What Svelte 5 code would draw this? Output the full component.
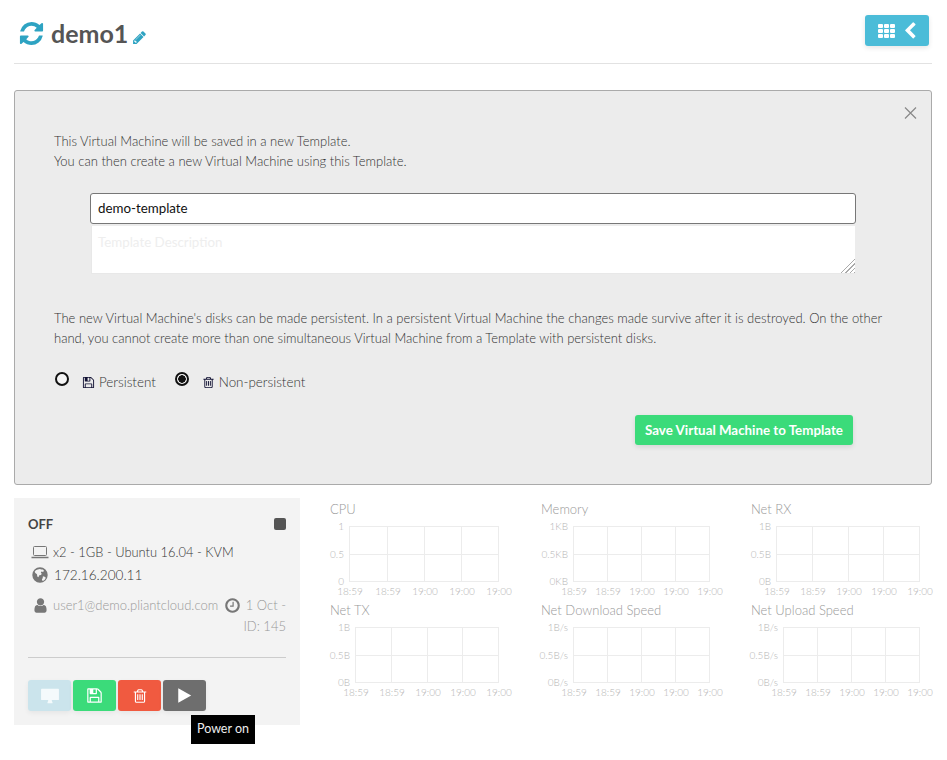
<script>
  const paths = {
    refresh: 'M1639 1056q0 5-1 7-64 268-268 434.5t-478 166.5q-146 0-282.5-55t-243.5-157l-129 129q-19 19-45 19t-45-19-19-45v-448q0-26 19-45t45-19h448q26 0 45 19t19 45-19 45l-137 137q71 66 161 102t187 36q134 0 250-65t186-179q11-17 53-117 8-23 30-23h192q13 0 22.500 9.500t9.500 22.500zm25-800v448q0 26-19 45t-45 19h-448q-26 0-45-19t-19-45 19-45l138-138q-148-137-349-137-134 0-250 65t-186 179q-11 17-53 117-8 23-30 23h-199q-13 0-22.500-9.500t-9.500-22.500v-7q65-268 270-434.500t480-166.500q146 0 284 55.500t245 156.500l130-129q19-19 45-19t45 19 19 45z',
    pencil: 'M491 1536l91-91-235-235-91 91v107h128v128h107zm523-928q0-22-22-22-10 0-17 7l-542 542q-7 7-7 17 0 22 22 22 10 0 17-7l542-542q7-7 7-17zm-54-192l416 416-832 832h-416v-416zm683 96q0 53-37 90l-166 166-416-416 166-165q36-38 90-38 53 0 91 38l235 234q37 39 37 91z',
    chevron: 'M1427 301l-531 531 531 531q19 19 19 45t-19 45l-166 166q-19 19-45 19t-45-19l-742-742q-19-19-19-45t19-45l742-742q19-19 45-19t45 19l166 166q19 19 19 45t-19 45z',
    save: 'M512 1536h768v-384h-768v384zm896 0h128v-896q0-14-10-38.500t-20-34.500l-281-281q-10-10-34-20t-39-10v416q0 40-28 68t-68 28h-576q-40 0-68-28t-28-68v-416h-128v1280h128v-416q0-40 28-68t68-28h832q40 0 68 28t28 68v416zm-384-928v-320q0-13-9.500-22.500t-22.500-9.500h-192q-13 0-22.500 9.500t-9.500 22.500v320q0 13 9.500 22.500t22.500 9.500h192q13 0 22.500-9.500t9.500-22.500zm640 32v928q0 40-28 68t-68 28h-1344q-40 0-68-28t-28-68v-1344q0-40 28-68t68-28h928q40 0 88 20t76 48l280 280q28 28 48 76t20 88z',
    trash: 'M704 736v576q0 14-9 23t-23 9h-64q-14 0-23-9t-9-23v-576q0-14 9-23t23-9h64q14 0 23 9t9 23zm256 0v576q0 14-9 23t-23 9h-64q-14 0-23-9t-9-23v-576q0-14 9-23t23-9h64q14 0 23 9t9 23zm256 0v576q0 14-9 23t-23 9h-64q-14 0-23-9t-9-23v-576q0-14 9-23t23-9h64q14 0 23 9t9 23zm128 724v-948h-896v948q0 22 7 40.500t14.500 27 10.500 8.500h832q3 0 10.500-8.500t14.500-27 7-40.500zm-672-1076h448l-48-117q-7-9-17-11h-317q-10 2-17 11zm928 32v64q0 14-9 23t-23 9h-96v948q0 83-47 143.500t-113 60.500h-832q-66 0-113-58.500t-47-141.500v-952h-96q-14 0-23-9t-9-23v-64q0-14 9-23t23-9h309l70-167q15-37 54-63t79-26h320q40 0 79 26t54 63l70 167h309q14 0 23 9t9 23z',
    user: 'M1536 1399q0 109-62.500 187t-150.500 78h-854q-88 0-150.500-78t-62.500-187q0-85 8.500-160.500t31.500-152 58.500-131 94-89 134.500-34.500q131 128 313 128t313-128q76 0 134.500 34.500t94 89 58.500 131 31.500 152 8.500 160.500zm-256-887q0 159-112.500 271.500t-271.500 112.500-271.500-112.500-112.500-271.500 112.500-271.500 271.500-112.500 271.500 112.500 112.500 271.500z',
    clock: 'M1024 544v448q0 14-9 23t-23 9h-320q-14 0-23-9t-9-23v-64q0-14 9-23t23-9h224v-352q0-14 9-23t23-9h64q14 0 23 9t9 23zm416 352q0-148-73-273t-198-198-273-73-273 73-198 198-73 273 73 273 198 198 273 73 273-73 198-198 73-273zm224 0q0 209-103 385.500t-279.500 279.500-385.500 103-385.500-103-279.500-279.500-103-385.500 103-385.500 279.500-279.500 385.500-103 385.500 103 279.500 279.500 103 385.500z',
    globe: 'M896 128a768 768 0 1 0 0 1536a768 768 0 1 0 0-1536zm-10 170l140 60 150-10 110 110-70 130-170-30-70 90 90 130-70 110-170 30-90 190-110-70-30-210-170-130-60-130 110-150 190-60zm300 730l180 30 110 110-90 170-150 120-110 20-40-130 80-150z',
    play: 'M240 140L1600 896L240 1652z',
    desktop: 'M160 256H1632a64 64 0 0 1 64 64V1200a64 64 0 0 1-64 64H1056q0 120 64 200v72H672v-72q64-80 64-200H160a64 64 0 0 1-64-64V320a64 64 0 0 1 64-64z'
  };

  const charts = [
    { title: 'CPU', x: [19, 57, 94, 131, 168], y: ['1', '0.5', '0'] },
    { title: 'Memory', x: [32, 66, 100, 134, 168], y: ['1KB', '0.5KB', '0KB'] },
    { title: 'Net RX', x: [25, 61, 97, 132, 168], y: ['1B', '0.5B', '0B'] },
    { title: 'Net TX', x: [25, 61, 97, 132, 168], y: ['1B', '0.5B', '0B'] },
    { title: 'Net Download Speed', x: [32, 66, 100, 134, 168], y: ['1B/s', '0.5B/s', '0B/s'] },
    { title: 'Net Upload Speed', x: [32, 66, 100, 134, 168], y: ['1B/s', '0.5B/s', '0B/s'] }
  ];
  const times = ['18:59', '18:59', '19:00', '19:00', '19:00'];
  const rows = [6, 34, 61];

  let persistent = $state(false);
  let name = $state('demo-template');
  let description = $state('');
</script>

{#snippet icon(d, size, cls = '')}
  <svg class={cls} width={size} height={size} viewBox="0 0 1792 1792" fill="currentColor" aria-hidden="true"><path {d} /></svg>
{/snippet}

<div class="page">
  <header class="top">
    <h1>
      {@render icon(paths.refresh, 27, 'spin')}
      <span>demo1</span>
      {@render icon(paths.pencil, 15, 'pencil')}
    </h1>
    <button class="back" type="button" aria-label="Back to list">
      <span class="grid-icon"><i></i><i></i><i></i><i></i><i></i><i></i><i></i><i></i><i></i></span>
      {@render icon(paths.chevron, 18)}
    </button>
  </header>

  <section class="dialog">
    <button class="close" type="button" aria-label="Close">
      <svg width="14" height="14" viewBox="0 0 14 14"><path d="M2 1.500l11 11M13 1.500l-11 11" stroke="#888" stroke-width="1.200" fill="none" /></svg>
    </button>
    <p class="intro">
      This Virtual Machine will be saved in a new Template.<br />
      You can then create a new Virtual Machine using this Template.
    </p>
    <div class="fields">
      <input type="text" bind:value={name} />
      <textarea placeholder="Template Description" bind:value={description}></textarea>
    </div>
    <p class="note">
      The new Virtual Machine's disks can be made persistent. In a persistent Virtual Machine the changes made survive after it is destroyed. On the other hand, you cannot create more than one simultaneous Virtual Machine from a Template with persistent disks.
    </p>
    <div class="radios">
      <label>
        <input type="radio" name="disks" checked={persistent} onchange={() => (persistent = true)} />
        {@render icon(paths.save, 13, 'ink')}
        Persistent
      </label>
      <label>
        <input type="radio" name="disks" checked={!persistent} onchange={() => (persistent = false)} />
        {@render icon(paths.trash, 13, 'ink')}
        Non-persistent
      </label>
    </div>
    <div class="actions">
      <button class="save" type="button">Save Virtual Machine to Template</button>
    </div>
  </section>

  <div class="bottom">
    <aside class="vm">
      <div class="state"><strong>OFF</strong><span class="stop"></span></div>
      <div class="line spec">
        <svg width="18" height="14" viewBox="0 0 18 14" fill="none" stroke="#777"><rect x="2.500" y="1.500" width="13" height="9" rx="1" /><path d="M0.500 12.500h17" stroke-width="1.500" /></svg>
        x2 - 1GB - Ubuntu 16.04 - KVM
      </div>
      <div class="line ip">
        <span class="globe">{@render icon(paths.globe, 18)}</span>
        172.16.200.11
      </div>
      <div class="meta">
        <div class="meta-row">
          <span class="owner">{@render icon(paths.user, 17)} user1@demo.pliantcloud.com</span>
          <span class="date">{@render icon(paths.clock, 17)} 1 Oct -</span>
        </div>
        <div class="vm-id">ID: 145</div>
      </div>
      <hr />
      <div class="btns">
        <button class="b vnc" type="button" aria-label="Console">{@render icon(paths.desktop, 20)}</button>
        <button class="b keep" type="button" aria-label="Save">{@render icon(paths.save, 17)}</button>
        <button class="b del" type="button" aria-label="Delete">{@render icon(paths.trash, 16)}</button>
        <button class="b power" type="button" aria-label="Power on">{@render icon(paths.play, 17)}</button>
        <span class="tip">Power on</span>
      </div>
    </aside>

    <div class="charts">
      {#each charts as c}
        <figure>
          <figcaption>{c.title}</figcaption>
          <svg width="200" height="79" viewBox="0 0 200 79">
            {#each rows as r, i}
              <line x1={c.x[0]} x2={c.x[4] + 1} y1={r + 0.5} y2={r + 0.5} />
              <text class="ytick" x={c.x[0] - 5} y={r + 3.5}>{c.y[i]}</text>
            {/each}
            {#each c.x as x, i}
              <line x1={x + 0.5} x2={x + 0.5} y1={rows[0]} y2={rows[2] + 1} />
              <text class="xtick" x={x + 1} y="75">{times[i]}</text>
            {/each}
          </svg>
        </figure>
      {/each}
    </div>
  </div>
</div>

<style>
  :global(body) {
    background: #fff;
    font-family: Lato, sans-serif;
    font-size: 13px;
    font-weight: 300;
    color: #333;
  }

  .page {
    width: 918px;
    margin-left: 14px;
    padding-bottom: 35px;
  }

  .top {
    display: flex;
    justify-content: space-between;
    height: 63px;
    border-bottom: 1px solid #e2e2e2;
    margin-bottom: 26px;
  }

  h1 {
    display: flex;
    align-items: center;
    margin: 0;
    padding: 8px 0 4px 4px;
    height: 63px;
    color: #555;
    font-size: 25px;
    font-weight: 700;
    line-height: 1;
    box-sizing: border-box;
  }

  h1 :global(.spin) {
    color: #2ea3c2;
    margin-right: 6px;
  }

  h1 :global(.pencil) {
    color: #2ea3c2;
    margin: 7px 0 0 4px;
  }

  .back {
    display: flex;
    align-items: center;
    justify-content: center;
    gap: 6px;
    width: 64px;
    height: 31px;
    margin: 15px 3px 0 0;
    padding: 0 0 0 3px;
    border: 0;
    border-radius: 3px;
    background: #4bbcd8;
    color: #fff;
    box-shadow: 0 2px 5px rgba(0, 0, 0, 0.1);
  }

  .grid-icon {
    display: grid;
    grid-template-columns: repeat(3, 5px);
    grid-auto-rows: 4px;
    gap: 1px;
  }

  .grid-icon i {
    background: #fff;
    border-radius: 1px;
  }

  .dialog {
    position: relative;
    box-sizing: border-box;
    height: 395px;
    padding: 40px 39px 0;
    border: 1px solid #aaa;
    border-radius: 3px;
    background: #ececec;
  }

  .close {
    position: absolute;
    top: 15px;
    right: 14px;
    padding: 0;
    border: 0;
    background: none;
    line-height: 0;
  }

  p {
    margin: 0;
    line-height: 20px;
  }

  .fields {
    display: flex;
    flex-direction: column;
    gap: 2px;
    margin: 22px 36px 0;
  }

  .fields input,
  .fields textarea {
    display: block;
    box-sizing: border-box;
    font-family: inherit;
    font-size: 13.333px;
    font-weight: 400;
    background: #fff;
    outline: none;
  }

  .fields input {
    width: 766px;
    height: 31px;
    padding: 0 7px 2px;
    border: 1px solid #777;
    border-radius: 3px;
    color: #111;
  }

  .fields textarea {
    width: 764px;
    height: 48px;
    margin-left: 1px;
    padding: 8px 6px;
    border: 1px solid #e8e8e8;
    border-top: 0;
    border-right: 0;
  }

  .fields textarea::placeholder {
    color: #eee;
  }

  .fields textarea::-webkit-resizer {
    background:
      linear-gradient(135deg, #fff 50%, transparent 50%),
      repeating-linear-gradient(135deg, #fff 0 2px, #aaa 2px 3px);
  }

  .note {
    margin-top: 34px;
  }

  .radios {
    display: flex;
    gap: 18px;
    margin-top: 23px;
    height: 22px;
    font-size: 13.4px;
  }

  .radios label {
    display: flex;
    align-items: center;
  }

  .radios input {
    appearance: none;
    box-sizing: border-box;
    width: 14px;
    height: 14px;
    margin: -6px 13px 0 1px;
    border: 2px solid #111;
    border-radius: 50%;
    background: #f4f4f4;
  }

  .radios input:checked {
    background: radial-gradient(circle, #111 0 3.500px, #f4f4f4 4px);
  }

  .radios :global(.ink) {
    color: #113;
    margin-right: 4px;
  }

  .actions {
    display: flex;
    justify-content: flex-end;
    margin: 22px 39px 0 0;
  }

  .save {
    width: 218px;
    height: 30px;
    padding: 0;
    border: 0;
    border-radius: 3px;
    background: #3bdb7a;
    color: #fff;
    font-family: inherit;
    font-size: 13.333px;
    font-weight: 700;
    box-shadow: 0 2px 5px rgba(0, 0, 0, 0.1);
  }

  .bottom {
    display: flex;
    gap: 30px;
    margin-top: 13px;
  }

  .vm {
    box-sizing: border-box;
    flex: none;
    width: 286px;
    height: 227px;
    padding: 15px 14px 0;
    background: #f3f3f3;
  }

  .state {
    display: flex;
    justify-content: space-between;
    align-items: center;
    height: 22px;
    color: #444;
  }

  .state strong {
    font-weight: 700;
  }

  .stop {
    width: 12px;
    height: 12px;
    border-radius: 2px;
    background: #555;
  }

  .line {
    display: flex;
    align-items: center;
    gap: 4px;
    color: #333;
    height: 23px;
  }

  .spec {
    margin: 5px 0 0 3px;
    font-size: 12.9px;
  }

  .ip {
    font-size: 13.6px;
  }

  .globe {
    display: flex;
    color: #777;
    margin-left: 3px;
    margin-right: 1px;
  }

  .meta {
    margin-top: 9px;
    color: #999;
    line-height: 21px;
  }

  .meta-row {
    display: flex;
    justify-content: space-between;
  }

  .owner,
  .date {
    display: flex;
    align-items: center;
    gap: 4px;
    height: 21px;
  }

  .owner :global(svg),
  .date :global(svg) {
    color: #777;
  }

  .owner {
    margin-left: 4px;
  }

  .date {
    gap: 5px;
  }

  .vm-id {
    text-align: right;
  }

  hr {
    margin: 20px 0 0;
    border: 0;
    border-top: 1px solid #ccc;
  }

  .btns {
    position: relative;
    display: flex;
    gap: 2px;
    margin-top: 22px;
  }

  .b {
    display: flex;
    align-items: center;
    justify-content: center;
    width: 43px;
    height: 31px;
    padding: 0;
    border: 0;
    border-radius: 3px;
    color: #fff;
    box-shadow: 0 2px 5px rgba(0, 0, 0, 0.06);
  }

  .vnc {
    width: 43px;
    background: #cbe4ec;
    color: #f4fafc;
  }

  .keep {
    background: #3bdb7a;
  }

  .del {
    background: #f05a40;
  }

  .power {
    background: #6e6e6e;
  }

  .tip {
    position: absolute;
    left: 163px;
    top: 35px;
    width: 64px;
    height: 29px;
    background: #000;
    color: #eee;
    font-size: 12.5px;
    font-weight: 400;
    line-height: 28px;
    text-align: center;
  }

  .charts {
    display: grid;
    grid-template-columns: 211px 210px 180px;
    grid-auto-rows: 101px;
  }

  figure {
    margin: 0;
  }

  figcaption {
    height: 22px;
    line-height: 22px;
    font-weight: 300;
    color: #999;
  }

  figure svg {
    display: block;
    overflow: visible;
  }

  line {
    stroke: #ececec;
    stroke-width: 1;
  }

  text {
    font-family: Lato, sans-serif;
    font-size: 10px;
    font-weight: 300;
    fill: #b4b4b4;
  }

  .ytick {
    text-anchor: end;
  }

  .xtick {
    text-anchor: middle;
  }
</style>
